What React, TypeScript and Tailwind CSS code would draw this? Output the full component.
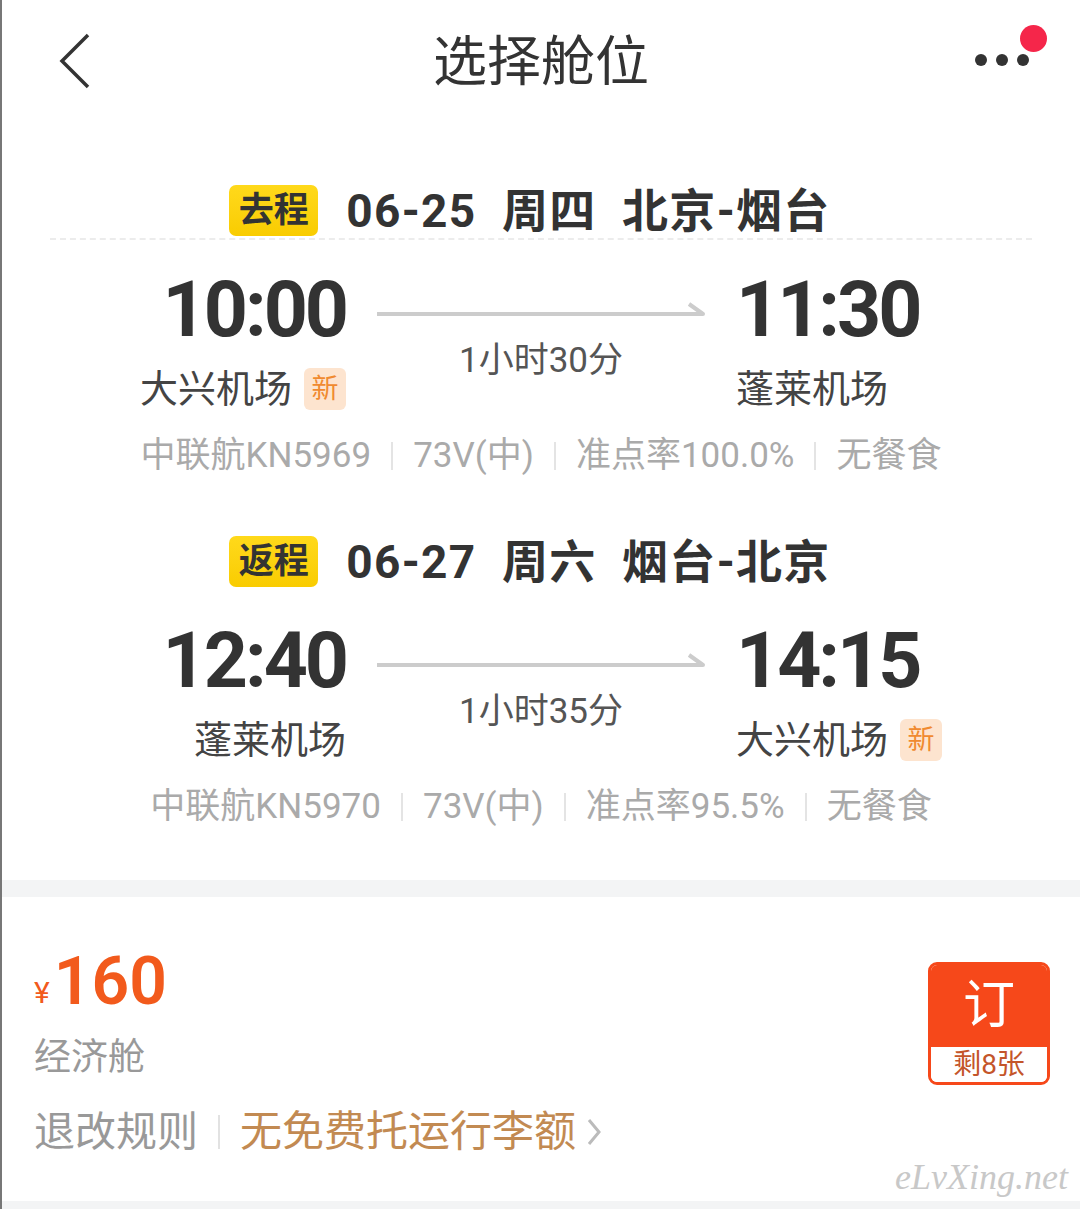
import React from "react";

const FONT = { fontFamily: 'Roboto, "Noto Sans CJK SC", sans-serif' };

type Leg = {
  tag: string;
  date: string;
  week: string;
  route: string;
  depTime: string;
  arrTime: string;
  depAirport: string;
  arrAirport: string;
  depNew?: boolean;
  arrNew?: boolean;
  duration: string;
  flight: string;
  plane: string;
  ontime: string;
  meal: string;
  dashed?: boolean;
};

const legs: Leg[] = [
  {
    tag: "去程",
    date: "06-25",
    week: "周四",
    route: "北京-烟台",
    depTime: "10:00",
    arrTime: "11:30",
    depAirport: "大兴机场",
    arrAirport: "蓬莱机场",
    depNew: true,
    duration: "1小时30分",
    flight: "中联航KN5969",
    plane: "73V(中)",
    ontime: "准点率100.0%",
    meal: "无餐食",
    dashed: true,
  },
  {
    tag: "返程",
    date: "06-27",
    week: "周六",
    route: "烟台-北京",
    depTime: "12:40",
    arrTime: "14:15",
    depAirport: "蓬莱机场",
    arrAirport: "大兴机场",
    arrNew: true,
    duration: "1小时35分",
    flight: "中联航KN5970",
    plane: "73V(中)",
    ontime: "准点率95.5%",
    meal: "无餐食",
  },
];

function NewBadge() {
  return (
    <span className="ml-[12px] inline-flex h-[42px] w-[42px] items-center justify-center rounded-[6px] bg-[#fde4cf] text-[27px] leading-none text-[#f08a30]">
      新
    </span>
  );
}

function Divider() {
  return <span className="mx-[20px] h-[28px] w-[2px] bg-[#e4e4e4]" />;
}

function LegBlock({ leg }: { leg: Leg }) {
  return (
    <div className="flex flex-col">
      <div className="flex items-center justify-center pr-[22px]">
        <span className="flex h-[51px] w-[89px] items-center justify-center rounded-[7px] bg-gradient-to-b from-[#ffd91a] to-[#f9cc00] text-[35px] font-bold leading-none text-[#333]">
          {leg.tag}
        </span>
        <span className="ml-[28px] text-[46px] font-bold leading-none tracking-[1.3px] text-[#333] whitespace-pre">
          {leg.date}  {leg.week}  {leg.route}
        </span>
      </div>
      {leg.dashed ? (
        <div className="mx-[48px] mt-[2px] border-t-2 border-dashed border-[#ececec]" />
      ) : (
        <div className="mt-[4px]" />
      )}
      <div className="mt-[32px] grid grid-cols-[1fr_328px_1fr] gap-x-[31px]">
        <div className="flex flex-col items-end">
          <span className="text-[77px] font-bold leading-[76px] tracking-[-3px] text-[#333]">
            {leg.depTime}
          </span>
          <span className="mt-[19px] flex h-[44px] items-center text-[38px] leading-none text-[#444]">
            {leg.depAirport}
            {leg.depNew && <NewBadge />}
          </span>
        </div>
        <div className="flex flex-col items-center">
          <svg width="328" height="16" viewBox="0 0 328 16" className="mt-[30px]">
            <path d="M0 12 H326 L312 2" fill="none" stroke="#cccccc" strokeWidth="4" strokeLinejoin="round" />
          </svg>
          <span className="mt-[25px] text-[35px] leading-none text-[#555]">{leg.duration}</span>
        </div>
        <div className="flex flex-col items-start">
          <span className="text-[77px] font-bold leading-[76px] tracking-[-3px] text-[#333]">
            {leg.arrTime}
          </span>
          <span className="mt-[19px] flex h-[44px] items-center text-[38px] leading-none text-[#444]">
            {leg.arrAirport}
            {leg.arrNew && <NewBadge />}
          </span>
        </div>
      </div>
      <div className="mt-[27px] flex items-center justify-center text-[35px] leading-none text-[#aaa]">
        <span>{leg.flight}</span>
        <Divider />
        <span>{leg.plane}</span>
        <Divider />
        <span>{leg.ontime}</span>
        <Divider />
        <span>{leg.meal}</span>
      </div>
    </div>
  );
}

export default function App() {
  return (
    <div className="relative flex min-h-[1209px] w-[1080px] flex-col border-l-2 border-[#777] bg-white" style={FONT}>
      <header className="relative flex h-[125px] items-center justify-center">
        <svg width="34" height="56" viewBox="0 0 34 56" className="absolute left-[56px] top-[33px]">
          <path d="M30 2 L4 28 L30 54" fill="none" stroke="#333" strokeWidth="3.5" />
        </svg>
        <h1 className="text-[54px] leading-none text-[#333]">选择舱位</h1>
        <div className="absolute left-[973px] top-[54px] flex gap-[9px]">
          <span className="h-[12px] w-[12px] rounded-full bg-[#333]" />
          <span className="h-[12px] w-[12px] rounded-full bg-[#333]" />
          <span className="h-[12px] w-[12px] rounded-full bg-[#333]" />
        </div>
        <span className="absolute left-[1018px] top-[25px] h-[27px] w-[27px] rounded-full bg-[#f5264a]" />
      </header>

      <div className="mt-[60px] flex flex-col">
        <LegBlock leg={legs[0]} />
        <div className="mt-[63px]">
          <LegBlock leg={legs[1]} />
        </div>
      </div>

      <div className="mt-[56px] h-[17px] bg-[#f3f4f5]" />

      <div className="relative flex items-start justify-between px-[32px] pt-[53px]">
        <div className="flex flex-col">
          <div className="flex items-end text-[#f25a1c]">
            <span className="mb-[6px] text-[30px] leading-none">¥</span>
            <span className="ml-[4px] text-[66px] font-semibold leading-[64px]">160</span>
          </div>
          <span className="mt-[25px] text-[37px] leading-none text-[#999]">经济舱</span>
          <div className="mt-[35px] flex items-center text-[41px] leading-none">
            <span className="text-[#999]">退改规则</span>
            <span className="mx-[20px] h-[34px] w-[2px] bg-[#e2e2e2]" />
            <span className="text-[42px] text-[#c28a52]">无免费托运行李额</span>
            <svg width="16" height="30" viewBox="0 0 16 30" className="ml-[10px]">
              <path d="M3 3 L13 15 L3 27" fill="none" stroke="#bbb" strokeWidth="3" />
            </svg>
          </div>
        </div>
        <div className="mr-[-2px] mt-[12px] flex h-[123px] w-[122px] flex-col overflow-hidden rounded-[9px] border-[3px] border-[#f6481a]">
          <div className="flex h-[82px] items-center justify-center bg-[#f6481a] text-[52px] leading-none text-white">
            订
          </div>
          <div className="flex flex-1 items-center justify-center bg-white text-[28px] leading-none text-[#c4552a]">
            剩8张
          </div>
        </div>
      </div>

      <span
        className="absolute bottom-[14px] right-[12px] text-[36px] italic leading-none text-[#c8c8c8]"
        style={{ fontFamily: '"Liberation Serif", serif' }}
      >
        eLvXing.net
      </span>
      <div className="mt-auto h-[8px] bg-[#f3f4f5]" />
    </div>
  );
}
